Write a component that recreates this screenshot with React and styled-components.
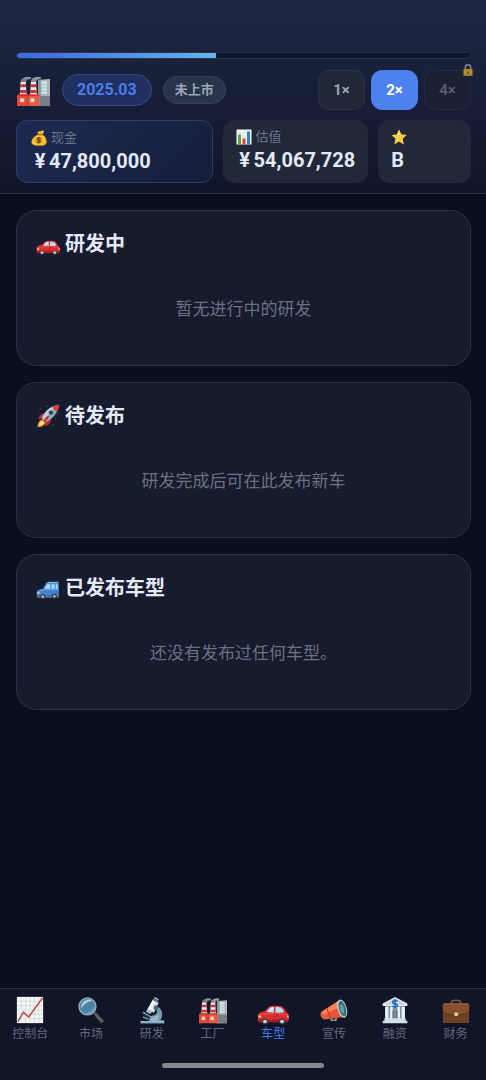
import React, { useState } from 'react';
import styled, { createGlobalStyle, css } from 'styled-components';

const GlobalStyle = createGlobalStyle`
  *, *::before, *::after { box-sizing: border-box; }
  body {
    margin: 0;
    background: #090f1c;
    color: #e4eaf8;
    font-family: Roboto, "Noto Sans CJK SC", sans-serif;
  }
  button { font: inherit; }
`;

/* ---------- icons ---------- */

const Icon = styled.svg.attrs({ viewBox: '0 0 32 32', 'aria-hidden': true })`
  display: block;
  flex: none;
  width: ${(p) => p.$size}px;
  height: ${(p) => p.$size}px;
`;

const Factory = ({ size }) => (
  <Icon $size={size}>
    <g transform="translate(0 2) scale(1 .94)">
      <path d="M3.500 7C3 2 7 .5 13.500 1v2.500C11 3 9 4 8.500 7z" fill="#767b80" />
      <path d="M13.500 7C13 2 17 .5 23 1v2.500C20 3 19 4 18.500 7z" fill="#8c9196" />
      <path d="M7 2.500c2-1 4-1 6.500-.7M17 2.500c2-1 4-1 6-.7" stroke="#a9aeb2" strokeWidth=".9" fill="none" />
      <path d="M20.500 4L32 3v28H20.500z" fill="#aeb4b8" />
      <path d="M20.500 4l2.500-.3V31h-2.500z" fill="#8f969b" />
      <path d="M24 5.500h5v13h-5z" fill="#c9e9e6" />
      <path d="M24 9h5M24 12.200h5M24 15.400h5" stroke="#8fa5a8" strokeWidth=".7" />
      <path d="M22 20.500h10V31H22z" fill="#777f84" />
      <path d="M3.500 6h5l.8 14H2.700zM13.500 6h5l.8 14h-6.600z" fill="#eceff1" />
      <path d="M3.300 8.500h5.400l.2 3H3.100zM2.900 14.500H9l.2 3H2.700zM13.300 8.500h5.400l.2 3h-5.800zM12.900 14.500H19l.2 3h-6.500z" fill="#c8323a" />
      <path d="M0 20l2-1.500h8.500V31H0z" fill="#e1483e" />
      <path d="M10.500 20l2-1.500h9V31h-11z" fill="#e85a48" />
      <path d="M0 20h21.500M10.500 19v12" stroke="#b5312f" strokeWidth=".7" />
      <path d="M3 22.800h4v4.200H3zM13 22.800h4v4.200h-4z" fill="#f4c7a0" />
      <path d="M4 24h2v2H4zM14 24h2v2h-2z" fill="#fff4d8" />
    </g>
  </Icon>
);

const Car = ({ size }) => (
  <Icon $size={size}>
    <g transform="translate(0 4) scale(1 .87)">
      <path d="M1 21C1 17 4 16 8 15l3-4c1-1.500 3-2 7-2h3c3 0 5 1 6.500 3.500L30 17c1.500 1 2 3 2 6l-1 5H2c-2-2-1-5-1-7z" fill="#d92c2d" />
      <path d="M9 16l3.500-4.200C13.500 10.500 15 10.300 17 10.300V17z" fill="#b9d9ef" />
      <path d="M18.500 10.300h3c2.500 0 4 1.500 5.500 5L26 17h-7.500z" fill="#b9d9ef" />
      <path d="M14.500 11l-3 5 1.500.2 3.500-5.500z" fill="#eaf6ff" />
      <path d="M1 20c7-3 18-2 30-1" stroke="#f2564c" strokeWidth="1.200" fill="none" />
      <path d="M1 25h30v2.500H1z" fill="#9d1f24" />
      <path d="M17.700 17v9" stroke="#a82126" strokeWidth=".5" />
      <path d="M19 19.500h2.200" stroke="#8b1b20" />
      <circle cx="8" cy="27" r="3.300" fill="#3b3d44" />
      <circle cx="8" cy="27" r="2" fill="#c9ccd0" />
      <circle cx="25" cy="27" r="3.300" fill="#3b3d44" />
      <circle cx="25" cy="27" r="2" fill="#c9ccd0" />
      <ellipse cx="2.800" cy="21.500" rx="1.600" ry="1.300" fill="#ffd79a" />
      <path d="M30 20h1.700v2.500H30z" fill="#ffb08a" />
    </g>
  </Icon>
);

const BlueCar = ({ size }) => (
  <Icon $size={size}>
    <path d="M1 22c0-3 4-4.500 8-5l3.500-6C13.500 9 15 8 18 8h10c2 0 2.500 1 2.500 3v16l-2 2H3c-2.500-1-2.500-4-2-7z" fill="#3f82d5" />
    <path d="M14 9.500C15 8 17 7.500 19 7.500h9c1.500 0 2 .5 2 2z" fill="#72b2ef" />
    <path d="M11.200 17l3.300-6H19v6zM20.500 11h4.300v6h-4.300zM26.200 11h2.600v6h-2.600z" fill="#b6d9f1" />
    <path d="M2 20.500c6-2.500 18-2.500 28-2.500" stroke="#77b8f3" fill="none" />
    <path d="M1 26h29v2.200H2z" fill="#5f6877" />
    <circle cx="9" cy="27.500" r="3.500" fill="#343b45" />
    <circle cx="9" cy="27.500" r="1.800" fill="#b5bdc4" />
    <circle cx="24.500" cy="27" r="3.500" fill="#343b45" />
    <circle cx="24.500" cy="27" r="1.800" fill="#b5bdc4" />
    <ellipse cx="3.300" cy="22.500" rx="1.600" ry="1.200" fill="#f8d993" />
  </Icon>
);

const Rocket = ({ size }) => (
  <Icon $size={size}>
    <path d="M5 7h1M14 3h1M26 20h1M29 13h1M22 28h1" stroke="#c1ccdd" />
    <path d="M12 12C7 12 4 16 3 20l7-1zM20 20c0 5-3 8-8 10l1-8z" fill="#bd2c35" />
    <path d="M8 20c-4 2-6 6-6 11 5 0 9-2 11-6z" fill="#f58a24" />
    <path d="M8 22c-3 2-4 4-4 7 3 0 6-1 7-4z" fill="#ffe477" />
    <path d="M8 19c3-8 9-15 22-18 0 11-8 19-17 23z" fill="#93adbb" />
    <path d="M8 19c3-8 9-15 20-17L11 22z" fill="#bed0d8" />
    <path d="M22 4c3-2 6-3 9-3.500C31 4 30 7 28 10c-3-1-5-3-6-6z" fill="#e23b3c" />
    <circle cx="20" cy="11.500" r="3.300" fill="#496f82" />
    <circle cx="20" cy="11.500" r="2" fill="#233b4b" />
    <path d="M11 21c0-2 3-5 7-6-1 4-3 6-7 9z" fill="#c6353c" />
  </Icon>
);

const MoneyBag = ({ size }) => (
  <Icon $size={size}>
    <path d="M15 9l-2-4c2-4 4-2 6-3s5-2 7 0c1 2-2 5-4 7z" fill="#f5b82e" />
    <path d="M14 9h9c6 4 9 10 8 16-1 5-5 6-15 6S1 29 1 24c0-6 6-12 13-15z" fill="#fcc232" />
    <path d="M28 16c3 6 2 11-2 13-5 3-15 2-21 0 3 3 24 5 26-4 .5-3-1-7-3-9z" fill="#db8b18" />
    <path d="M13 9.500h11" stroke="#a75d14" strokeWidth="2" />
    <circle cx="15.500" cy="20.500" r="6.500" fill="#d08a22" />
    <path d="M19 17c-2-2-6-1.500-6 1 0 3 6 2 6 5 0 2.500-5 3-7 .5M15.500 14v13" fill="none" stroke="#5b3510" strokeWidth="1.700" />
  </Icon>
);

const BarChart = ({ size }) => (
  <Icon $size={size}>
    <path d="M1 1h30v30H1z" fill="#f2f5f6" />
    <path d="M1 8h30M1 16h30M1 24h30M8 1v30M16 1v30M24 1v30" stroke="#c6d9dc" />
    <path d="M4 11h6v20H4z" fill="#5fa63c" />
    <path d="M13 19h6v12h-6z" fill="#dc4337" />
    <path d="M22 5h6v26h-6z" fill="#2d81c7" />
  </Icon>
);

const Star = ({ size }) => (
  <Icon $size={size}>
    <path d="M16 1l4.500 10.200L31 12l-8 7.500L25.500 31 16 25 6.500 31 9 19.500 1 12l10.500-.8z" fill="#fcd348" />
    <path d="M16 1l4.500 10.200L31 12l-8 7.500L25.500 31 16 18z" fill="#f9c93d" />
    <path d="M16 4l2 8-6-.5z" fill="#ffee91" />
  </Icon>
);

const Lock = ({ size }) => (
  <Icon $size={size}>
    <path d="M9 15V9c0-9 14-9 14 0v6" fill="none" stroke="#8a8d94" strokeWidth="4" />
    <rect x="4" y="13" width="24" height="18" rx="2" fill="#b6922e" />
    <path d="M4 17h24M4 27h24" stroke="#a27f26" strokeWidth="1.500" />
    <path d="M14 21a2 2 0 1 1 4 0l.5 5h-5z" fill="#4c3c1b" />
  </Icon>
);

const LineChart = ({ size }) => (
  <Icon $size={size}>
    <path d="M1 1h30v30H1z" fill="#f6f7f7" />
    <path d="M1 6h30M1 11h30M1 16h30M1 21h30M1 26h30M6 1v30M11 1v30M16 1v30M21 1v30M26 1v30" stroke="#c9d9d5" strokeWidth=".9" />
    <path d="M2 29.500L8.500 18.500l6 5.500L30.500 2" fill="none" stroke="#c6404a" strokeWidth="1.600" />
  </Icon>
);

const Magnifier = ({ size }) => (
  <Icon $size={size}>
    <g transform="translate(1 1) scale(.95)">
      <path d="M18 20l2.500-3 10.500 11c1 2-2 4.500-4 3.500z" fill="#49474a" />
      <path d="M21 21l8.500 8.500" stroke="#777477" strokeWidth="1.500" />
      <circle cx="11.500" cy="11.500" r="11" fill="#9baeb8" />
      <circle cx="11.500" cy="11.500" r="9.400" fill="#4b83a4" />
      <path d="M4 14A9 9 0 0 1 18 5c-4 0-11 3-14 9z" fill="#a5cedf" />
      <path d="M6 18c5 3 12 0 14-8 1 8-6 14-14 8z" fill="#6baac5" />
    </g>
  </Icon>
);

const Microscope = ({ size }) => (
  <Icon $size={size}>
    <g transform="translate(2 1) scale(.9 .95)">
      <path d="M21 12l4 1c5 5 4 11 1 15h5v4H1v-3h11c-1-4 2-7 6-7 5-1 5-6 1-9z" fill="#729bad" />
      <path d="M14 29c0-4 3-6 7-6l4-3c0 4-2 7-2 10z" fill="#94b8c5" />
      <path d="M17 3l7 4-6 12-8-4z" fill="#dce4e8" />
      <path d="M17 3l3 1.500-6 12-4-1.500z" fill="#fafcfd" />
      <path d="M18 2l6 3-1.500 2-6-3z" fill="#5d7a88" />
      <path d="M19 0l5 2.500-1 1.500-5-2.500z" fill="#b6cad2" />
      <path d="M10 14l6 3.500-2.500 3L8 18z" fill="#a9bdc6" />
      <path d="M4 18.500l10 5.500M4 24l7 3" stroke="#7ea2b2" strokeWidth="1.800" />
      <path d="M4 20.500l9 5" stroke="#1f3d50" strokeWidth="1.500" />
      <circle cx="20.500" cy="13" r="2.800" fill="#4d6875" />
      <path d="M1 30h30" stroke="#abcad4" strokeWidth="1.200" />
    </g>
  </Icon>
);

const Megaphone = ({ size }) => (
  <Icon $size={size}>
    <g transform="translate(0 3) scale(1 .88)">
      <path d="M12 23l1 5h5l1-5" fill="none" stroke="#7e9ca7" strokeWidth="2" />
      <path d="M2 17L22 2l6 22-23 3C1 26-1 19 2 17z" fill="#e65735" />
      <path d="M2 17L22 2l2 8L3 22C1 20 1 18 2 17z" fill="#ff8053" />
      <path d="M8 13l4 13" stroke="#b83c2b" strokeWidth="1.200" />
      <ellipse cx="25.300" cy="13" rx="5.300" ry="12" transform="rotate(-13 25.300 13)" fill="#bfd0d4" />
      <ellipse cx="25.600" cy="13" rx="4" ry="10.300" transform="rotate(-13 25.600 13)" fill="#346c75" />
      <path d="M24 7c3 2 4 7 3 13-4-3-5-9-3-13z" fill="#66a4aa" />
      <ellipse cx="3" cy="22" rx="1.500" ry="4" transform="rotate(-15 3 22)" fill="#c5694f" />
    </g>
  </Icon>
);

const Bank = ({ size }) => (
  <Icon $size={size}>
    <g transform="translate(1 1) scale(.94)">
      <path d="M16 0l15 8v3H1V8z" fill="#dfe9ee" />
      <path d="M16 2l12 7H4z" fill="#b7c9d3" />
      <path d="M4 11h24v17H4z" fill="#80929f" />
      <path d="M4 12h4v15H4zM10 12h3v15h-3zM19 12h3v15h-3zM24 12h4v15h-4z" fill="#e9f1f4" />
      <path d="M13 17h6v11h-6z" fill="#637885" />
      <path d="M16 17v11" stroke="#96a7af" />
      <path d="M3 26h26v3H3zM1 29h30v3H1z" fill="#d3e0e6" />
      <circle cx="16" cy="8" r="5.500" fill="#c7dced" />
      <path d="M19 5.500c-2-2-6-1-6 1 0 3 6 1 6 4 0 2-4 2.500-6 .5M16 2.500v11" fill="none" stroke="#2465ba" strokeWidth="1.800" />
    </g>
  </Icon>
);

const Briefcase = ({ size }) => (
  <Icon $size={size}>
    <g transform="translate(0 3) scale(1 .9)">
      <path d="M11 7V4c0-2.500 10-2.500 10 0v3" fill="none" stroke="#8c5637" strokeWidth="1.800" />
      <rect x="1" y="6" width="30" height="25" rx="2" fill="#704126" />
      <path d="M1 8c0-1 1-2 2-2h26c1 0 2 1 2 2v9c-3 3-9 4-15 4S4 20 1 17z" fill="#85502f" />
      <path d="M1 17c5 5 25 5 30 0" fill="none" stroke="#4c2b1c" />
      <path d="M2 7h28" stroke="#9c6240" strokeWidth="1.200" />
      <rect x="14" y="17.500" width="4.500" height="4.500" rx="1" fill="#e6bd73" />
      <path d="M16 18.500v2" stroke="#fff0bc" />
    </g>
  </Icon>
);

/* ---------- page ---------- */

const Page = styled.div`
  min-height: 100vh;
  display: flex;
  flex-direction: column;
`;

const Header = styled.header`
  display: flex;
  flex-direction: column;
  padding: 52px 15px 10px 16px;
  background: linear-gradient(180deg, #1e2843 0%, #181f38 45%, #101629 100%);
  border-bottom: 1px solid #2b3245;
`;

const Progress = styled.div`
  height: 7px;
  border: 1px solid #2b3248;
  border-radius: 4px;
  background: #10172a;
  overflow: hidden;
`;

const ProgressFill = styled.div`
  height: 100%;
  border-radius: 3px 1px 1px 3px;
  background: linear-gradient(90deg, #3b66e2, #61b6ed);
`;

const TopRow = styled.div`
  display: flex;
  align-items: center;
  margin-top: 11px;
  gap: 11px;
`;

const Logo = styled.span`
  width: 35px;
  padding-left: 1px;
`;

const DatePill = styled.span`
  padding: 0 14px;
  border: 1px solid #304b8b;
  border-radius: 16px;
  background: #203060;
  color: #4c7de8;
  font-size: 16px;
  font-weight: 700;
  line-height: 30px;
`;

const StatusPill = styled.span`
  padding: 0 11px;
  border: 1px solid #3a4459;
  border-radius: 14px;
  background: #29334a;
  color: #9ba5b9;
  font-size: 13px;
  font-weight: 700;
  line-height: 26px;
`;

const SpeedGroup = styled.div`
  display: flex;
  gap: 6px;
  margin-left: auto;
`;

const SpeedButton = styled.button`
  position: relative;
  width: 47px;
  height: 40px;
  padding: 0;
  border: 1px solid #2a3345;
  border-radius: 11px;
  background: #1f2738;
  color: #9aa4b8;
  font-size: 15px;
  font-weight: 700;
  ${(p) => p.$active && css`
    background: #4d81ee;
    border-color: #4d81ee;
    color: #fff;
  `}
  &:disabled {
    background: #1a2134;
    border-color: #242c3f;
    color: #535c6f;
  }
`;

const LockBadge = styled.span`
  position: absolute;
  top: -7px;
  right: -4px;
`;

const Stats = styled.div`
  display: grid;
  grid-template-columns: 197fr 145fr 93fr;
  gap: 10px;
  margin-top: 10px;
`;

const Stat = styled.div`
  height: 63px;
  padding: 8px 12px;
  border: 1px solid #202839;
  border-radius: 11px;
  background: #202839;
  white-space: nowrap;
  ${(p) => p.$primary && css`
    padding: 9px 14px;
    border-color: #2b3c6e;
    background: linear-gradient(135deg, #1d2a51, #151e3a);
  `}
`;

const StatLabel = styled.div`
  display: flex;
  align-items: center;
  gap: 4px;
  height: 16px;
  color: #6a7489;
  font-size: 13px;
  line-height: 16px;
`;

const StatValue = styled.div`
  margin-top: 2px;
  font-size: 20px;
  font-weight: 700;
  line-height: 26px;
  color: #e2e9f8;
`;

const Yen = styled.span`
  display: inline-block;
  width: 18px;
  text-align: center;
`;

const Main = styled.main`
  flex: 1;
  display: flex;
  flex-direction: column;
  gap: 16px;
  padding: 16px 15px 16px 16px;
`;

const Card = styled.section`
  min-height: 156px;
  padding: 19px;
  border: 1px solid #2a3045;
  border-radius: 20px;
  background: #161b2d;
`;

const CardTitle = styled.h2`
  display: flex;
  align-items: center;
  gap: 5px;
  margin: 0;
  font-size: 20px;
  font-weight: 700;
  line-height: 28px;
`;

const EmptyText = styled.p`
  margin: 38px 0 0;
  color: #6a7183;
  font-size: 17px;
  line-height: 26px;
  text-align: center;
`;

const Footer = styled.footer`
  position: sticky;
  bottom: 0;
  padding-bottom: 12px;
  border-top: 1px solid #272f43;
  background: #101628;
`;

const Nav = styled.nav`
  display: flex;
  height: 74px;
  padding-top: 5px;
`;

const NavItem = styled.button`
  flex: 1;
  display: flex;
  flex-direction: column;
  align-items: center;
  min-width: 0;
  padding: 0;
  border: 0;
  background: none;
  color: ${(p) => (p.$active ? '#4a7be8' : '#606a7f')};
  font-size: 12px;
  line-height: 16px;
`;

const NavIcon = styled.span`
  display: flex;
  align-items: center;
  justify-content: center;
  height: 32px;
`;

const HomeIndicator = styled.div`
  width: 33.4%;
  height: 5px;
  margin: 0 auto;
  border-radius: 3px;
  background: #85878a;
`;

const speeds = [
  { label: '1×' },
  { label: '2×' },
  { label: '4×', locked: true },
];

const sections = [
  { icon: Car, title: '研发中', empty: '暂无进行中的研发' },
  { icon: Rocket, title: '待发布', empty: '研发完成后可在此发布新车' },
  { icon: BlueCar, title: '已发布车型', empty: '还没有发布过任何车型。' },
];

const tabs = [
  { icon: LineChart, label: '控制台' },
  { icon: Magnifier, label: '市场' },
  { icon: Microscope, label: '研发' },
  { icon: Factory, label: '工厂' },
  { icon: Car, label: '车型' },
  { icon: Megaphone, label: '宣传' },
  { icon: Bank, label: '融资' },
  { icon: Briefcase, label: '财务' },
];

export default function App() {
  const [speed, setSpeed] = useState('2×');
  const [tab, setTab] = useState('车型');
  const progress = 44;

  return (
    <Page lang="zh-CN">
      <GlobalStyle />
      <Header>
        <Progress role="progressbar" aria-valuenow={progress} aria-label="本月进度">
          <ProgressFill style={{ width: `${progress}%` }} />
        </Progress>
        <TopRow>
          <Logo><Factory size={33} /></Logo>
          <DatePill>2025.03</DatePill>
          <StatusPill>未上市</StatusPill>
          <SpeedGroup>
            {speeds.map(({ label, locked }) => (
              <SpeedButton
                key={label}
                type="button"
                disabled={locked}
                $active={speed === label}
                onClick={() => setSpeed(label)}
              >
                {label}
                {locked && <LockBadge><Lock size={12} /></LockBadge>}
              </SpeedButton>
            ))}
          </SpeedGroup>
        </TopRow>
        <Stats>
          <Stat $primary>
            <StatLabel><MoneyBag size={16} />现金</StatLabel>
            <StatValue><Yen>¥</Yen>47,800,000</StatValue>
          </Stat>
          <Stat>
            <StatLabel><BarChart size={16} />估值</StatLabel>
            <StatValue><Yen>¥</Yen>54,067,728</StatValue>
          </Stat>
          <Stat>
            <StatLabel><Star size={16} /></StatLabel>
            <StatValue>B</StatValue>
          </Stat>
        </Stats>
      </Header>
      <Main>
        {sections.map(({ icon: Glyph, title, empty }) => (
          <Card key={title}>
            <CardTitle><Glyph size={24} />{title}</CardTitle>
            <EmptyText>{empty}</EmptyText>
          </Card>
        ))}
      </Main>
      <Footer>
        <Nav>
          {tabs.map(({ icon: Glyph, label }) => (
            <NavItem
              key={label}
              type="button"
              $active={tab === label}
              onClick={() => setTab(label)}
            >
              <NavIcon><Glyph size={tab === label ? 32 : 28} /></NavIcon>
              {label}
            </NavItem>
          ))}
        </Nav>
        <HomeIndicator />
      </Footer>
    </Page>
  );
}
